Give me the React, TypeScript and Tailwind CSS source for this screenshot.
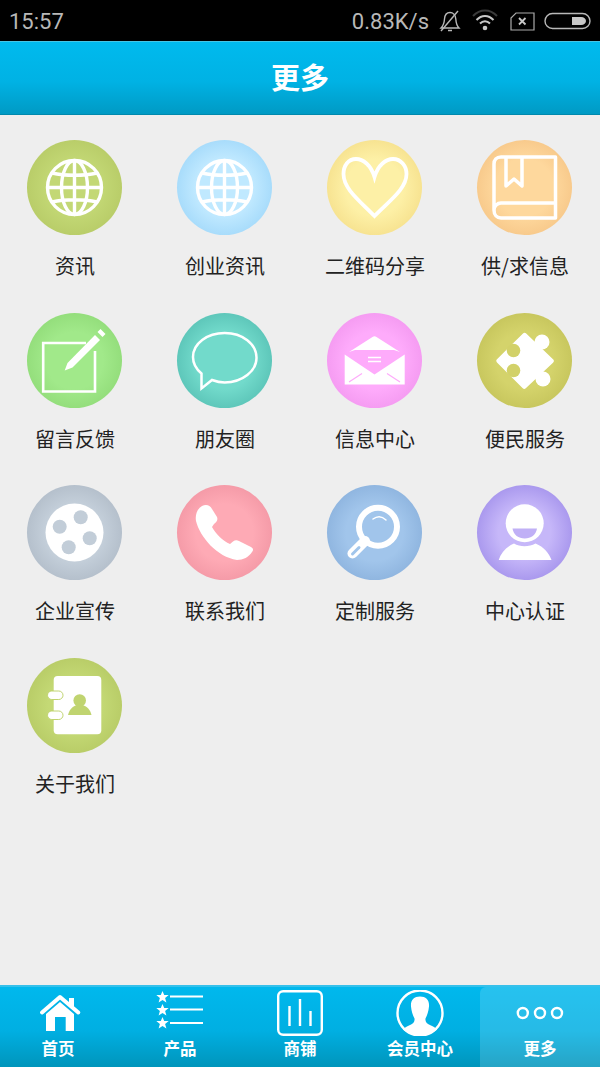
import React from "react";

const W = "#ffffff";

function Globe() {
  return (
    <g fill="none" stroke={W} strokeWidth="3.400">
      <circle cx="47.500" cy="47.500" r="27" />
      <ellipse cx="47.500" cy="47.500" rx="13" ry="27" />
      <path d="M47.500 20v55M20.500 47.500h54M25 33c13 3 32 3 45 0M25 62c13-3 32-3 45 0" />
    </g>
  );
}
function Heart() {
  return (
    <path
      d="M47.500 37C44 25 36 19 29 19 21 19 16.500 26 16.500 34 16.500 49 33 61 47.500 76 62 61 79.500 49 79.500 34 79.500 26 74 19 66 19 59 19 51 25 47.500 37Z"
      fill="none"
      stroke={W}
      strokeWidth="3.800"
      strokeLinejoin="miter"
    />
  );
}
function Book() {
  return (
    <g fill="none" stroke={W} strokeWidth="3.500" strokeLinejoin="round">
      <path d="M78.500 17H24C19.500 17 17 20 17 24V70C17 75 20 78 24 78H78.500ZM78.500 63H24C20.500 63 17 66 17 70" />
      <path d="M29 18V46L37 39 45 46V18" />
    </g>
  );
}
function Edit() {
  return (
    <g>
      <path d="M59 30H16.200V78.500H68V38" fill="none" stroke={W} strokeWidth="2.600" />
      <path d="M37.700 57.500 40.500 50 68 22 73 27 45.500 54.500Z" fill={W} />
      <path d="M70.500 19 73.500 16 78.500 21 75.500 24Z" fill={W} />
    </g>
  );
}
function Bubble() {
  return (
    <path
      d="M47.700 20C30 20 16 30.500 16 44 16 50 19 56 24.500 60.500L24.500 75.500 35 67C39 68.500 43.500 69.500 47.700 69.500 65.500 69.500 79.500 58 79.500 44.700 79.500 31 65.500 20 47.700 20Z"
      fill="none"
      stroke={W}
      strokeWidth="2.500"
    />
  );
}
function Envelope({ c }: { c: string }) {
  return (
    <g>
      <path d="M22 39 45.500 24C47 23 48 23 49.500 24L73 39 67 37H28Z" fill={W} />
      <path d="M17.700 41.500 47.500 61.500 77.700 41.500V71.500H17.700Z" fill={W} />
      <path d="M22 69 35 60.500M73 69 60 60.500" stroke={c} strokeWidth="1.200" />
      <path d="M41 44.500h13M41 48.500h13" stroke={W} strokeWidth="1.300" />
    </g>
  );
}
function Puzzle({ c }: { c: string }) {
  return (
    <g>
      <path d="M46 20.500C47 19.500 48.200 19.500 49.200 20.500L76 46.300C77.200 47.500 77.200 48.500 76 49.700L49 75C47.800 76.200 46.800 76.200 45.500 75L20 49.500C19 48.500 19 47.200 20 46.200Z" fill={W} />
      <circle cx="65" cy="29" r="7.500" fill={W} />
      <circle cx="66" cy="66" r="7.500" fill={W} />
      <circle cx="36.500" cy="37.500" r="6.800" fill={c} />
      <circle cx="36.500" cy="57.500" r="6.800" fill={c} />
    </g>
  );
}
function Film({ c }: { c: string }) {
  return (
    <g>
      <circle cx="47.500" cy="47.500" r="29" fill={W} />
      <circle cx="53.700" cy="32.300" r="7" fill={c} />
      <circle cx="32.700" cy="41.700" r="7" fill={c} />
      <circle cx="62.700" cy="53.300" r="7" fill={c} />
      <circle cx="41.700" cy="62.300" r="7" fill={c} />
    </g>
  );
}
function Phone() {
  return (
    <path
      d="M25 21C29 19 33 20 35 24L40 32C41 35 40 37 37 39L35 42C38 48 46 56 53 59L56 56.500C58 55 60 55 62 56L74 62C76.500 63.500 76.500 65 75 67 72 72 66 75 60 75 40 72 23 52 19 36 18 30 20 24 25 21Z"
      fill={W}
    />
  );
}
function Search({ c }: { c: string }) {
  return (
    <g fill="none">
      <circle cx="51" cy="41.700" r="19" stroke={W} strokeWidth="6" />
      <path d="M38 56 25.500 68.500" stroke={W} strokeWidth="10" strokeLinecap="round" />
      <path d="M32 62.500 25.500 69" stroke={c} strokeWidth="3" strokeLinecap="round" />
      <path d="M46 34C50 31 55 31 59 35" stroke={W} strokeWidth="1.500" strokeLinecap="round" />
    </g>
  );
}
function Person({ c }: { c: string }) {
  return (
    <g>
      <circle cx="47.700" cy="38.300" r="19" fill={W} />
      <path d="M35.500 43.500H60C59 50 54 53.500 47.700 53.500 41.500 53.500 36.500 50 35.500 43.500Z" fill={c} />
      <path d="M21.700 75C24 68 29 62 37 58.500 43 62 52 62 58.500 58.500 67 62 72 68 74.500 75Z" fill={W} />
    </g>
  );
}
function Contact({ c }: { c: string }) {
  return (
    <g>
      <rect x="26.700" y="18" width="47.600" height="58.300" rx="4" fill={W} />
      <rect x="20.500" y="33" width="15.500" height="8.500" rx="4.250" fill={W} stroke={c} strokeWidth="1" />
      <rect x="20.500" y="53" width="15.500" height="8.500" rx="4.250" fill={W} stroke={c} strokeWidth="1" />
      <circle cx="52.700" cy="42.500" r="6.300" fill={c} />
      <path d="M41 57C42.500 51 46 48 50 47H55C60 48 63.500 52 64.500 57Z" fill={c} />
    </g>
  );
}

const items: { label: string; bg: string; icon: React.ReactNode }[] = [
  { label: "资讯", bg: "bg-[radial-gradient(circle_closest-side,#c3d875_55%,#b9cd69_100%)]", icon: <Globe /> },
  { label: "创业资讯", bg: "bg-[radial-gradient(circle_closest-side,#c0e9ff_60%,#a8dcfb_100%)]", icon: <Globe /> },
  { label: "二维码分享", bg: "bg-[radial-gradient(circle_closest-side,#fdf0a6_60%,#f7e391_100%)]", icon: <Heart /> },
  { label: "供/求信息", bg: "bg-[radial-gradient(circle_closest-side,#fed89d_60%,#f8ca8c_100%)]", icon: <Book /> },
  { label: "留言反馈", bg: "bg-[radial-gradient(circle_closest-side,#a1e98a_60%,#94de7c_100%)]", icon: <Edit /> },
  { label: "朋友圈", bg: "bg-[radial-gradient(circle_closest-side,#72dacb_60%,#5ec7ba_100%)]", icon: <Bubble /> },
  { label: "信息中心", bg: "bg-[radial-gradient(circle_closest-side,#feabfb_60%,#f59cf2_100%)]", icon: <Envelope c="#feabfb" /> },
  { label: "便民服务", bg: "bg-[radial-gradient(circle_closest-side,#d4d36b_60%,#c8c75e_100%)]", icon: <Puzzle c="#d2d169" /> },
  { label: "企业宣传", bg: "bg-[radial-gradient(circle_closest-side,#c4cfda_60%,#b5c0cc_100%)]", icon: <Film c="#c2cdd8" /> },
  { label: "联系我们", bg: "bg-[radial-gradient(circle_closest-side,#feaab5_60%,#f59ba8_100%)]", icon: <Phone /> },
  { label: "定制服务", bg: "bg-[radial-gradient(circle_closest-side,#a1c5eb_60%,#90b6e0_100%)]", icon: <Search c="#a1c5eb" /> },
  { label: "中心认证", bg: "bg-[radial-gradient(circle_closest-side,#c6b7f9_55%,#aa99ee_100%)]", icon: <Person c="#c0b0f6" /> },
  { label: "关于我们", bg: "bg-[radial-gradient(circle_closest-side,#c4d975_55%,#b9cd68_100%)]", icon: <Contact c="#c0d470" /> },
];

function Star({ y }: { y: number }) {
  return (
    <path
      transform={`translate(162.500 ${y})`}
      d="M0-6 1.700-1.900 6.200-1.900 2.600 1 3.900 5.500 0 3 -3.900 5.500 -2.600 1 -6.200-1.900 -1.700-1.900Z"
      fill={W}
    />
  );
}

function TabIcon({ i }: { i: number }) {
  if (i === 0)
    return (
      <svg width="46" height="46" viewBox="37 991 46 46">
        <path d="M42 1013.500 60 998 78.300 1013.500" fill="none" stroke={W} strokeWidth="4" strokeLinecap="round" strokeLinejoin="round" />
        <path d="M69 999H74V1009L69 1005Z" fill={W} />
        <path d="M60 1003 74 1015V1032H65.700V1018H55V1032H46V1015Z" fill={W} />
      </svg>
    );
  if (i === 1)
    return (
      <svg width="50" height="46" viewBox="155 991 50 46">
        <Star y={998} />
        <Star y={1011} />
        <Star y={1024} />
        <path d="M170 997.500H203M170 1010.500H203M170 1024H203" stroke={W} strokeWidth="2" />
      </svg>
    );
  if (i === 2)
    return (
      <svg width="46" height="46" viewBox="277 991 46 46">
        <rect x="278.200" y="992.200" width="43.600" height="43.600" rx="5" fill="none" stroke={W} strokeWidth="2.400" />
        <path d="M289.500 1007V1027M300 1000V1027M310.500 1012V1027" stroke={W} strokeWidth="2.400" />
      </svg>
    );
  if (i === 3)
    return (
      <svg width="48" height="46" viewBox="396 990.500 48 46">
        <circle cx="420" cy="1013.500" r="22.500" fill="none" stroke={W} strokeWidth="2.400" />
        <path d="M420 997C414 997 410.500 1000.500 411 1007 411.500 1012 413 1016 414.500 1019 415 1022 413.500 1024.500 409 1026 406 1027.500 404 1028.500 403 1030 407 1033.500 413 1035.500 420 1035.500 427 1035.500 433 1033.500 437 1030 436 1028.500 434 1027.500 431 1026 426.500 1024.500 425 1022 425.500 1019 427 1016 428.500 1012 429 1007 429.500 1000.500 426 997 420 997Z" fill={W} />
      </svg>
    );
  return (
    <svg width="48" height="46" viewBox="516 990 48 46">
      <g fill="none" stroke={W} strokeWidth="2.400">
        <circle cx="522.800" cy="1013" r="5" />
        <circle cx="540" cy="1013" r="5" />
        <circle cx="557" cy="1013" r="5" />
      </g>
    </svg>
  );
}

const tabs = ["首页", "产品", "商铺", "会员中心", "更多"];

export default function App() {
  return (
    <div className="flex h-[1067px] w-[600px] flex-col overflow-hidden bg-[#eeeeee] font-['Noto_Sans_CJK_SC','Noto_Sans',sans-serif]">
      <div className="flex h-[41px] shrink-0 items-center bg-black pl-[9px] pr-[9px] font-['Roboto',sans-serif] text-[22px] text-[#b8b8b8]">
        <span className="mt-[2px]">15:57</span>
        <span className="mt-[2px] ml-auto">0.83K/s</span>
        <svg className="ml-[10px] mt-[1px]" width="22" height="24" viewBox="0 0 22 24" fill="none" stroke="#b8b8b8" strokeWidth="1.400">
          <path d="M2 19H20C17.500 16.500 17 13 16.800 10 16.500 6 14 3.500 11 3.500 8 3.500 5.800 6 5.500 10 5.200 14 4.500 16.500 2 19ZM9 21.500H13" />
          <path d="M2 22 19 2" />
        </svg>
        <svg className="ml-[10px] mt-[1px]" width="28" height="24" viewBox="0 0 28 24" fill="none">
          <path d="M2 7C9-.5 19-.5 26 7" stroke="#3a3a3a" strokeWidth="2" />
          <path d="M5.500 11C10.500 5.500 17.500 5.500 22.500 11M9 14.500C12 11.500 16 11.500 19 14.500" stroke="#c8c8c8" strokeWidth="2" />
          <circle cx="14" cy="19" r="2.300" fill="#c8c8c8" />
        </svg>
        <svg className="ml-[11px] mt-[1px]" width="26" height="22" viewBox="0 0 26 22" fill="none" stroke="#aaaaaa" strokeWidth="1.200">
          <path d="M6 3H24V20H1V8Z" />
          <path d="M9 8 15.500 14.500M15.500 8 9 14.500" strokeWidth="1.800" stroke="#c8c8c8" />
        </svg>
        <svg className="ml-[8px] mt-[1px]" width="47" height="20" viewBox="0 0 47 20" fill="none">
          <rect x="1" y="2.500" width="45" height="15" rx="7.500" stroke="#b8b8b8" strokeWidth="1.400" />
          <path d="M28 6H37C40 6 42 8 42 10 42 12 40 14 37 14H28Z" fill="#c8c8c8" />
        </svg>
      </div>

      <div className="flex h-[74px] shrink-0 items-center justify-center border-t border-t-[#45c5e6] border-b border-b-[#0089ad] bg-[linear-gradient(#00baee,#00b2e4_55%,#009ac4)] pb-[3px] text-[29px] font-bold text-white">
        更多
      </div>

      <div className="flex-1 pt-[25px]">
        <div className="grid grid-cols-4">
          {items.map((it) => (
            <div key={it.label} className="flex h-[172.670px] flex-col items-center">
              <div className={`mr-[1px] h-[95px] w-[95px] shrink-0 rounded-full ${it.bg}`}>
                <svg width="95" height="95" viewBox="0 0 95 95">
                  {it.icon}
                </svg>
              </div>
              <div className="mt-[17px] text-[20px] leading-[28px] whitespace-nowrap text-[#222222]">{it.label}</div>
            </div>
          ))}
        </div>
      </div>

      <div className="grid h-[82px] shrink-0 grid-cols-5 border-t-2 border-t-[#36c0ea] bg-[linear-gradient(#00b8ed,#00afe2_55%,#0095bb)]">
        {tabs.map((t, i) => (
          <div
            key={t}
            className={`flex flex-col items-center pt-[3px] ${i === 4 ? "rounded-tl-[6px] bg-white/15" : ""}`}
          >
            <TabIcon i={i} />
            <span className={`mt-[1px] text-[16.500px] leading-[22px] font-bold whitespace-nowrap text-white ${i === 0 ? "-translate-x-[2px]" : ""}`}>{t}</span>
          </div>
        ))}
      </div>
    </div>
  );
}
